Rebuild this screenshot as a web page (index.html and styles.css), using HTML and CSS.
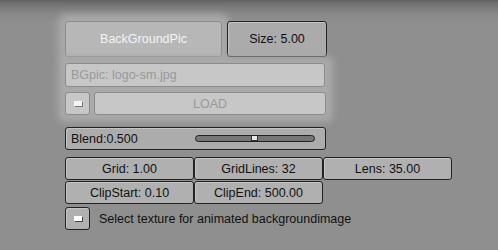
FILE: index.html
```html
<!DOCTYPE html>
<html>
<head>
<meta charset="utf-8">
<link rel="stylesheet" href="styles.css">
</head>
<body>
<div class="panel">
  <div class="row r1">
    <div class="btn dis big glow"><span class="t">BackGroundPic</span></div>
    <div class="btn size"><span class="t">Size: 5.00</span></div>
  </div>
  <div class="glowblock">
    <div class="row r2">
      <div class="btn dis field"><span class="t">BGpic: logo-sm.jpg</span></div>
    </div>
    <div class="row r3">
      <div class="btn dis tog"><span class="chk"></span></div>
      <div class="btn dis load"><span class="t">LOAD</span></div>
    </div>
  </div>
  <div class="row r4">
    <div class="btn blend">
      <span class="t">Blend:0.500</span>
      <span class="track"><span class="handle"></span></span>
    </div>
  </div>
  <div class="row r5">
    <div class="btn w3"><span class="t">Grid: 1.00</span></div>
    <div class="btn w3"><span class="t">GridLines: 32</span></div>
    <div class="btn w3"><span class="t">Lens: 35.00</span></div>
  </div>
  <div class="row r6">
    <div class="btn w3"><span class="t">ClipStart: 0.10</span></div>
    <div class="btn w3"><span class="t">ClipEnd: 500.00</span></div>
  </div>
  <div class="row r7">
    <div class="btn tog norm"><span class="chk"></span></div>
    <span class="t label">Select texture for animated backgroundimage</span>
  </div>
</div>
</body>
</html>
```
FILE: styles.css
```css
html, body {
  margin: 0;
  padding: 0;
}
body {
  width: 498px;
  height: 250px;
  overflow: hidden;
  background: linear-gradient(to bottom, #626262 0px, #787878 6px, #888888 14px, #8f8f8f 22px, #8f8f8f 100%);
  font-family: "Liberation Sans", Arial, sans-serif;
  font-size: 12.5px;
  color: #111;
}
.panel {
  display: flex;
  flex-direction: column;
  padding: 21px 0 0 65px;
}
.row {
  display: flex;
}
.t {
  display: inline-block;
  line-height: 1;
  padding-top: 1px;
}
.btn {
  box-sizing: border-box;
  height: 23px;
  border: 1px solid #222;
  border-radius: 3px;
  background: #b0b0b0;
  display: flex;
  align-items: center;
  justify-content: center;
  white-space: nowrap;
  box-shadow: inset 1px 1px 0 #c4c4c4;
}
.dis {
  border-color: #8c8c8c;
  color: #999999;
  background: #c7c7c7;
  box-shadow: none;
}
.r1 { gap: 5px; }
.big {
  width: 157px;
  height: 36px;
  background: #b7b7b7;
  color: #f4f4f4;
}
.glow {
  box-shadow: 0 0 7px 7px #a9a9a9;
}
.size {
  width: 100px;
  height: 36px;
  background: #ababab;
}
.glowblock {
  margin-top: 6px;
  width: 261px;
  box-shadow: 0 0 7px 7px #a9a9a9;
  background: #a9a9a9;
  border-radius: 2px;
}
.field {
  width: 260px;
  height: 24px;
  justify-content: flex-start;
  padding-left: 5px;
}
.r3 {
  margin-top: 5px;
  gap: 4px;
}
.tog {
  width: 25px;
  height: 23px;
}
.load {
  width: 232px;
}
.chk {
  width: 8px;
  height: 5px;
  background: #fff;
  box-shadow: 1px 1px 0 #444;
}
.dis .chk {
  background: #f4f4f4;
  box-shadow: 1px 1px 0 #777;
}
.r4 { margin-top: 12px; }
.blend {
  width: 261px;
  justify-content: space-between;
  padding: 0 10px 0 5px;
  background: #acacac;
}
.track {
  position: relative;
  width: 120px;
  height: 7px;
  box-sizing: border-box;
  border: 1px solid #222;
  border-radius: 4px;
  background: #767676;
}
.handle {
  position: absolute;
  left: 55px;
  top: 0;
  width: 7px;
  height: 5px;
  box-sizing: border-box;
  background: #e6e6e6;
  border: 1px solid #333;
  border-top: none;
}
.r5 { margin-top: 7px; }
.r6 { margin-top: 1px; }
.w3 {
  width: 129px;
  height: 23px;
}
.r7 {
  margin-top: 3px;
  align-items: center;
  gap: 9px;
}
.norm {
  background: #b0b0b0;
}
```
